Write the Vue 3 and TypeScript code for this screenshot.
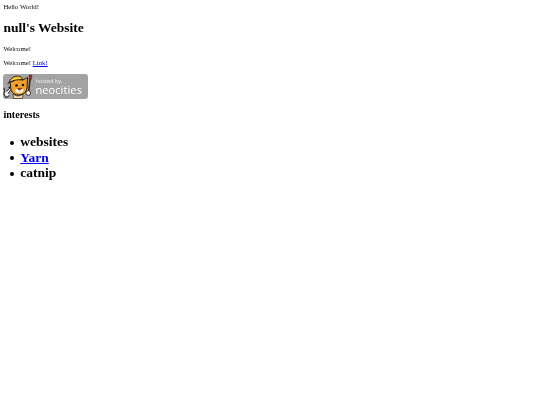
<script setup lang="ts">
const interests: { label: string; href?: string }[] = [
  { label: 'websites' },
  { label: 'Yarn', href: '#' },
  { label: 'catnip' },
]
</script>

<template>
  <main class="page">
    <div>Hello World!</div>
    <h1 class="title">null's Website</h1>
    <p class="text">Welcome!</p>
    <p class="text">Welcome! <a href="#">Link!</a></p>
    <a class="badge" href="#" aria-label="hosted by neocities">
      <svg class="cat" viewBox="0 0 32 25" width="32" height="25">
        <!-- wrench -->
        <path d="M3 20 L9 13" stroke="#2e2e2e" stroke-width="2.8" fill="none" />
        <path d="M3 20 L9 13" stroke="#f2f2f2" stroke-width="1.3" fill="none" />
        <path d="M0.8 14 L2 17 L0.8 20 L3 23.5 L6.5 21.5" stroke="#2e2e2e" stroke-width="1.1" fill="#f2f2f2" />
        <path d="M5 13 L7 15 L9 12 Z" fill="#2e2e2e" />
        <!-- body -->
        <path d="M10 20 Q15 24 20 20 L19.5 24.5 L10.5 24.5 Z" fill="#f3d9a8" stroke="#33241a" stroke-width="0.7" />
        <!-- head -->
        <path d="M7 8 L8 16 Q10 21 16 21 Q23 20.5 24 14 L24.5 3.5 L20 6 L12 5 Z" fill="#f2a12e" stroke="#2b1d12" stroke-width="1" />
        <path d="M12 17 Q15 20.5 19 18.5 Q21 17 20.5 15 L13 15 Z" fill="#fff1d6" />
        <!-- hat -->
        <path d="M6 8.5 Q8 3 13 2.2 Q18 1.6 20 5.5 Q13 5 6 8.5 Z" fill="#f6c53a" stroke="#2b1d12" stroke-width="0.9" />
        <path d="M4.5 9.5 L11 6.5" stroke="#2b1d12" stroke-width="1" />
        <!-- face -->
        <circle cx="13.5" cy="11.5" r="1.3" fill="#151515" />
        <circle cx="20" cy="11" r="1.3" fill="#151515" />
        <path d="M14.5 14.5 Q16.5 18 18.8 14.2 Z" fill="#c8443c" stroke="#2b1d12" stroke-width="0.5" />
        <!-- brush -->
        <path d="M27.2 4 L25.6 18" stroke="#3d2a1c" stroke-width="1.7" fill="none" />
        <path d="M26.4 0.8 L29 1.2 L28.2 5.5 L26.2 5.2 Z" fill="#a62f3c" stroke="#2b1d12" stroke-width="0.5" />
        <circle cx="25.2" cy="19" r="2.4" fill="#f4f1ea" stroke="#2b1d12" stroke-width="0.8" />
      </svg>
      <span class="badge-text">
        <span class="hosted">hosted by,</span>
        <span class="neo">neocities</span>
      </span>
    </a>
    <h2 class="sub">interests</h2>
    <ul class="list">
      <li v-for="item in interests" :key="item.label" class="item">
        <a v-if="item.href" :href="item.href">{{ item.label }}</a>
        <template v-else>{{ item.label }}</template>
      </li>
    </ul>
  </main>
</template>

<style>
html, body { margin: 0; background: #fff; }
</style>

<style scoped>
.page {
  padding: 3.375px;
  font-family: "Liberation Serif", serif;
  font-size: 6.75px;
  line-height: 1.15;
  color: #000;
  filter: blur(0.3px);
}
.title { font-size: 13.5px; margin: 9.05px 0; font-weight: 700; }
.text { margin: 6.75px 0; }
a { color: #0000ee; }
.badge {
  display: flex;
  width: 84.5px;
  height: 25px;
  box-sizing: border-box;
  background: #a3a3a3;
  border-radius: 3px;
  text-decoration: none;
  color: #fff;
  overflow: hidden;
}
.cat { flex: none; }
.badge-text {
  display: flex;
  flex-direction: column;
  font-family: "Open Sans", sans-serif;
  line-height: 1;
  padding-top: 4.5px;
}
.hosted { font-size: 5.6px; line-height: 6px; color: #f0f0f0; }
.neo { font-size: 11px; line-height: 11px; letter-spacing: 0.1px; }
.sub { font-size: 10.125px; margin: 10.4px 0 8.4px; font-weight: 700; }
.list {
  margin: 13.5px 0;
  padding-left: 16.875px;
  font-size: 13.5px;
  font-weight: 700;
  list-style: none;
}
.item { position: relative; }
.item::before {
  content: "";
  position: absolute;
  left: -10.5px;
  top: 6.5px;
  width: 4px;
  height: 4px;
  border-radius: 50%;
  background: #000;
}
</style>
